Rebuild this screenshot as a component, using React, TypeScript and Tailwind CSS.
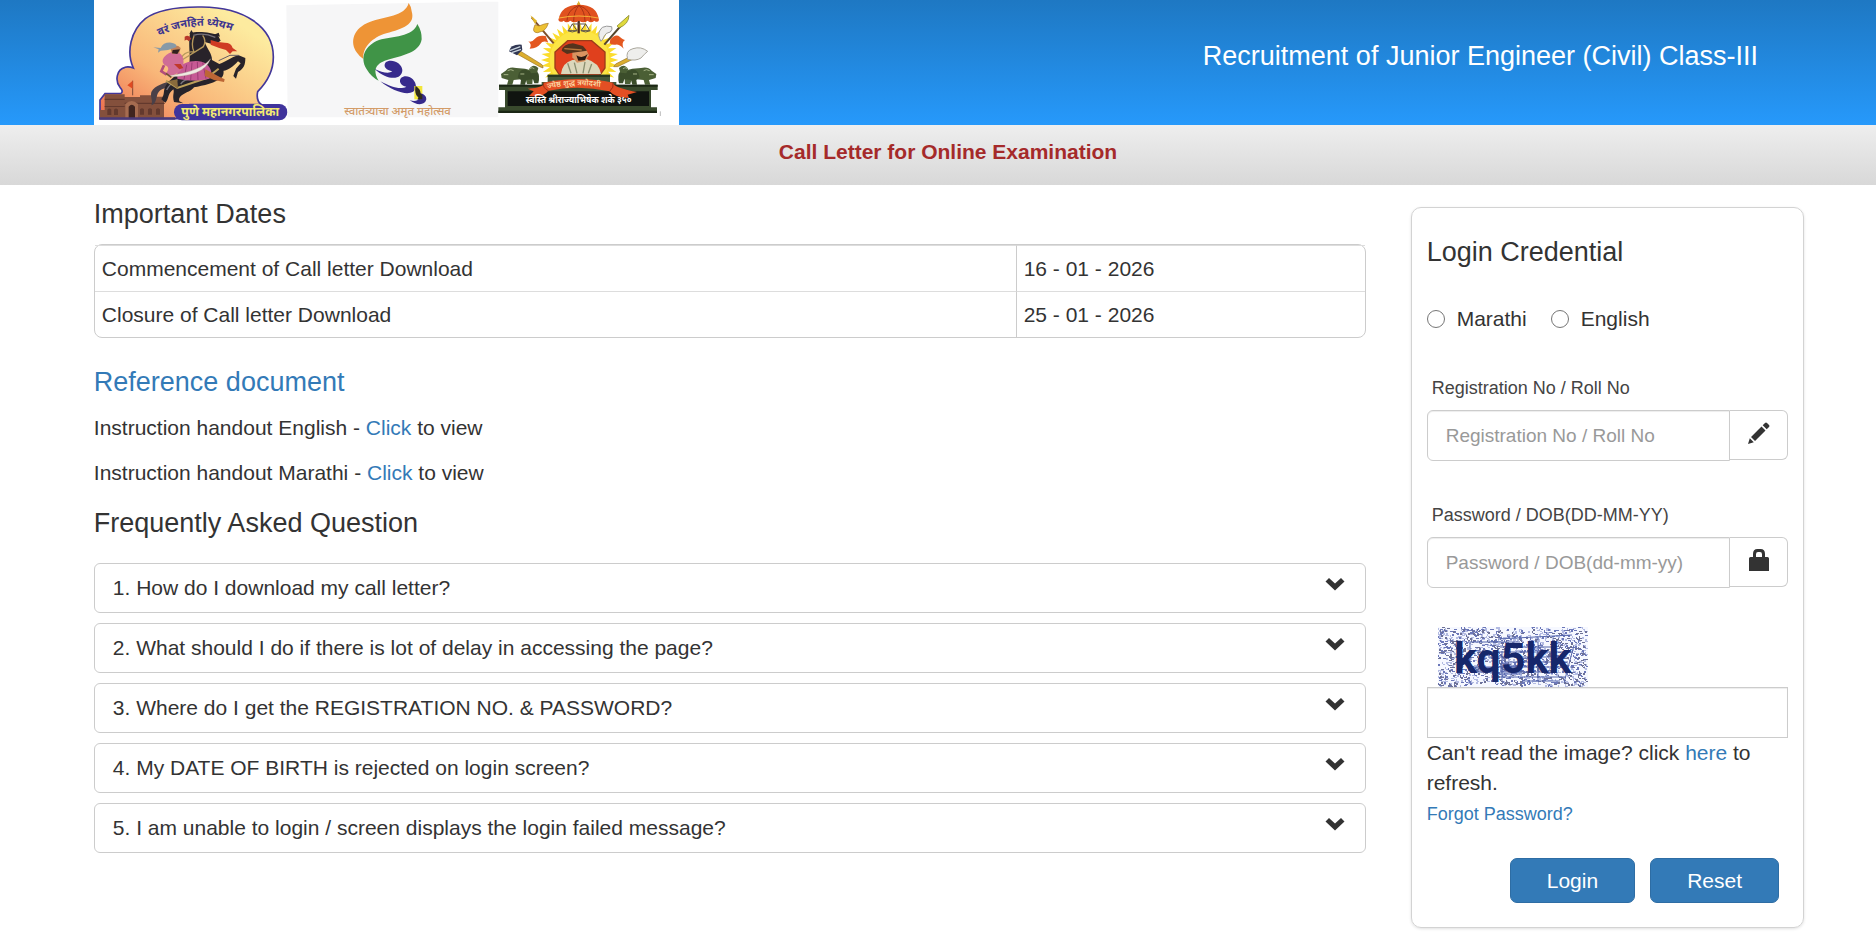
import React from "react";

const FAQS = [
  "How do I download my call letter?",
  "What should I do if there is lot of delay in accessing the page?",
  "Where do I get the REGISTRATION NO. & PASSWORD?",
  "My DATE OF BIRTH is rejected on login screen?",
  "I am unable to login / screen displays the login failed message?",
];

const DATES = [
  ["Commencement of Call letter Download", "16 - 01 - 2026"],
  ["Closure of Call letter Download", "25 - 01 - 2026"],
];

const DEVANAGARI = '"Noto Sans Devanagari", "Noto Sans", "Lohit Devanagari", sans-serif';

function radialPoints(cx: number, cy: number, outer: number, inner: number, count: number) {
  const points: string[] = [];
  for (let i = 0; i < count * 2; i++) {
    const r = i % 2 === 0 ? outer : inner;
    const a = (Math.PI * i) / count - Math.PI / 2;
    points.push(`${(cx + r * Math.cos(a)).toFixed(1)},${(cy + r * Math.sin(a)).toFixed(1)}`);
  }
  return points.join(" ");
}

function HorsemanEmblem() {
  return (
    <g transform="translate(-4 0) scale(.33333)">
      <path
        d="M45 281H92C100 276 96 268 90 262C74 242 80 208 105 202C114 199 122 201 130 204C108 156 122 92 166 56C206 26 268 20 335 21C462 22 551 80 550 172C550 212 534 244 503 275C500 290 502 306 515 314H300V356H30V300Z"
        fill="url(#sky)"
        stroke="#43379a"
        strokeWidth="5"
      />
      <path d="M44 283H104V291H150V286H200V290H222V358H30V330H44Z" fill="#84503c" />
      <g fill="#63392d">
        <path d="M44 296h60v4H44zM104 308h120v4H104zM44 318h60v3H44z" />
        <path d="M52 345v-16q6-7 12 0v16zM72 345v-16q6-7 12 0v16zM150 344v-16q6-7 12 0v16zM174 344v-16q6-7 12 0v16zM198 344v-16q6-7 12 0v16z" />
      </g>
      <path d="M106 354v-42q19-18 38 0v42z" fill="#a66c50" />
      <path d="M116 354v-34q9-12 19 0v34z" fill="#40251f" />
      <path d="M28 352h228v7H28z" fill="#4b3a78" />
      <path d="M128 286V242" stroke="#7b4a3a" strokeWidth="3" />
      <path d="M128 242l-16 14 16 10z" fill="#e04a22" />
      <rect x="252" y="312" width="340" height="49" rx="24" fill="#40349c" />
      <text x="274" y="347" fontSize="37" fontWeight="700" fill="#f3ea72" fontFamily={DEVANAGARI}>
        पुणे महानगरपालिका
      </text>
      <path id="motto" d="M208 108Q335 46 462 108" fill="none" />
      <text fontSize="33" fontWeight="700" fill="#3e3590" fontFamily={DEVANAGARI}>
        <textPath href="#motto">वरं जनहितं ध्येयम</textPath>
      </text>
      <path d="M246 240C222 252 196 254 184 276C180 292 190 302 184 316C202 310 196 290 206 276C216 264 232 264 250 262Z" fill="#4a4048" />
      <path
        d="M300 100C322 92 366 98 384 106L392 122L374 134L344 126C352 148 366 160 366 180L392 194C402 206 404 222 396 232C380 248 338 258 312 262C302 278 262 282 268 304L280 310L252 306C246 286 254 278 250 268C230 284 238 298 226 308L214 298C226 282 218 272 228 256C244 230 280 214 298 192C302 164 294 136 300 100Z"
        fill="#28232a"
      />
      <path d="M376 196C404 190 424 170 446 166L466 174C466 194 462 206 444 216L438 236L430 228L438 206L452 190L444 184C430 200 412 214 390 214Z" fill="#28232a" />
      <path d="M386 182L420 166L446 166" fill="none" stroke="#625b64" strokeWidth="3" />
      <path d="M310 106Q340 96 376 112M272 252Q286 232 320 240M230 270Q240 250 262 240" fill="none" stroke="#77727b" strokeWidth="4" />
      <path d="M298 102l6-12 6 10zM372 104l14-6 4 12z" fill="#28232a" />
      <path d="M284 110Q296 102 304 116L296 124Q292 116 284 122Z" fill="#b8372b" />
      <path d="M362 120Q384 128 404 128T428 144L442 154L428 154L420 162L408 150Q386 144 362 134Z" fill="#cf3a24" />
      <path d="M312 108Q302 134 312 156Q284 152 274 174M338 106Q350 122 340 140L276 180" fill="none" stroke="#b5985b" strokeWidth="4" />
      <path d="M228 242L262 264L350 234L386 206" fill="none" stroke="#bda05a" strokeWidth="6" />
      <path d="M232 244L264 266L262 238Z" fill="#8a6b3c" />
      <path d="M262 208C276 184 326 174 350 192C366 208 368 226 358 236C328 244 290 242 262 236Z" fill="#c65a94" />
      <path d="M290 194l-8 44M306 188l-4 52M322 186l2 54M338 188l10 48" stroke="#9b3c73" strokeWidth="3" />
      <path d="M346 208L388 230L404 238L402 246L372 240L344 228Z" fill="#bd6635" />
      <path d="M222 172C236 152 264 150 274 164C284 178 282 198 272 212C256 226 236 232 226 222C238 210 238 200 224 196C216 188 216 180 222 172Z" fill="#cf6c96" />
      <path d="M222 196L214 214L230 224" fill="none" stroke="#b24d7c" strokeWidth="8" />
      <path d="M240 140Q262 132 272 144L268 160L246 162Z" fill="#c28158" />
      <path d="M248 150L270 148L262 162L246 160Z" fill="#30201e" />
      <path d="M190 142L212 144Q220 126 244 128Q264 132 258 142L234 150L212 152L204 158L206 148Z" fill="#8799a7" />
      <path d="M252 192h20l8 12-12 4z" fill="#c0392b" />
      <path d="M234 228Q286 220 316 208T362 176Q350 206 318 218T238 230Z" fill="#efe9e2" stroke="#a99a8a" strokeWidth="1" />
      <path d="M228 220l16 12" stroke="#6d5332" strokeWidth="5" />
    </g>
  );
}

function FestivalEmblem() {
  return (
    <g transform="translate(191 0) scale(.33333)">
      <path d="M4 16L600 5H640V352H8Z" fill="#f6f6f7" />
      <path d="M371 9C360 50 300 48 254 66C206 84 192 126 216 158Q224 170 235 177C232 142 262 112 304 100C354 86 392 74 380 34Q378 18 371 9Z" fill="#ee9436" />
      <path d="M397 72C384 112 322 108 282 120C240 136 224 172 244 206Q258 230 281 242C264 214 268 192 306 180C346 168 404 160 410 118Q411 94 397 72Z" fill="#409447" />
      <path d="M301 188C316 174 350 186 352 210C352 238 312 246 268 206C292 218 312 222 322 214C304 210 294 200 301 188Z" fill="#372a8c" />
      <path d="M348 234C364 220 394 236 393 262C388 292 332 282 286 244C320 262 346 270 364 260C348 258 340 244 348 234Z" fill="#372a8c" />
      <rect x="388" y="258" width="24" height="40" fill="#f2e63a" />
      <path d="M392 258Q408 270 406 280Q424 284 424 298C420 318 392 316 374 300C388 306 400 302 402 294Q388 286 392 258Z" fill="#372a8c" />
      <path d="M392 258Q408 270 406 280L412 286V298H390Q402 298 400 290Q388 282 392 258Z" fill="#302b16" />
      <text x="178" y="345" fontSize="34" fontWeight="500" fill="#d39b68" fontFamily={DEVANAGARI}>
        स्वातंत्र्याचा अमृत महोत्सव
      </text>
    </g>
  );
}

function Lion() {
  return (
    <g fill="#4b5f35">
      <path d="M62 212Q74 198 94 204L120 206Q140 208 144 224L142 252H126L122 236L86 240L82 254H66L70 240L50 234L48 222Z" />
      <path d="M102 218Q114 202 128 212L156 214Q166 226 160 250H148L144 238L124 240L120 254H106L108 240L98 232Z" fill="#3b4d2a" />
      <path d="M132 208Q144 188 160 204L156 218L138 220Z" />
      <path d="M68 212Q78 206 86 212M56 224h14M106 222h12M134 206q8-6 14 0" fill="none" stroke="#a6b488" strokeWidth="3" />
    </g>
  );
}

function CoronationEmblem() {
  return (
    <g transform="translate(391 0) scale(.33333)">
      <polygon points={radialPoints(284, 180, 116, 92, 40)} fill="#fbdc2c" />
      <circle cx="284" cy="180" r="90" fill="#fce545" />
      <polygon points="248,122 320,122 360,156 360,204 340,232 228,232 210,204 210,156" fill="#e0401d" stroke="#9b3b1a" strokeWidth="4" />
      <path d="M228 222Q232 188 262 180L306 178Q342 188 348 222Z" fill="#dcd7bb" />
      <path d="M248 190l10 30M268 188l8 32M300 186l-6 34M320 192l-10 28" stroke="#8a8f70" strokeWidth="4" />
      <path d="M262 146L304 150L312 166L300 184L276 188L262 172Z" fill="#d99360" />
      <path d="M274 166Q292 178 308 162L300 180L280 182Z" fill="#2b1912" />
      <path d="M230 152Q234 132 264 130L294 138L306 152L262 158L246 162Z" fill="#54331d" />
      <path d="M238 146L290 150" stroke="#b8783b" strokeWidth="4" />
      <path d="M281 10V100" stroke="#4b2a22" strokeWidth="7" />
      <path d="M281 2l6 14h-12z" fill="#e6b32b" />
      <path d="M220 60Q228 14 282 14T342 60Q338 70 328 62Q318 72 308 62Q296 72 282 62Q268 72 256 62Q244 72 236 62Q226 70 220 60Z" fill="#e0511f" />
      <path d="M282 16Q246 30 246 62M282 16Q266 34 266 64M282 16Q300 34 300 64M282 16Q318 30 318 62" fill="none" stroke="#a73214" strokeWidth="3" />
      <path d="M222 54Q282 42 340 54" fill="none" stroke="#f5b439" strokeWidth="3" />
      <g fill="none" stroke="#5d554e" strokeWidth="3">
        <path d="M262 72H302M262 72L250 92H276ZM302 72L288 92H314Z" />
        <path d="M248 92q14 8 28 0M288 92q14 8 28 0" />
      </g>
      <path d="M140 52L206 130" stroke="#7d4f2b" strokeWidth="6" />
      <path d="M136 46L156 62L150 72Z" fill="#e3b827" />
      <path d="M146 86Q144 98 158 98L176 92Q186 84 190 70L178 72L162 78L150 74Z" fill="#edc133" stroke="#a5731d" strokeWidth="2" />
      <path d="M182 108Q160 104 150 116T130 124Q142 134 134 146Q158 144 166 132T190 128Z" fill="#e4571f" />
      <path d="M428 54L358 134" stroke="#54452b" strokeWidth="6" />
      <path d="M432 46Q432 72 402 84L396 78Z" fill="#dfd93c" stroke="#7b7b26" strokeWidth="2" />
      <path d="M344 116Q336 98 352 82Q364 76 380 80Q384 88 376 96Q362 98 358 108T348 124Z" fill="#ededed" stroke="#9a9a9a" strokeWidth="3" />
      <path d="M376 118Q392 100 404 110T420 120Q408 128 416 146Q402 132 392 134T374 130Z" fill="#e4571f" />
      <path d="M104 152L168 192Q176 196 174 204L164 200L96 162Z" fill="#dcae2e" stroke="#9a7421" strokeWidth="2" />
      <path d="M72 154Q76 132 110 134L112 150L96 166Z" fill="#303653" />
      <path d="M74 152L106 140M80 158L108 148" stroke="#c9d4dd" strokeWidth="4" />
      <path d="M466 154L392 192L386 200L398 200L468 166Z" fill="#dcae2e" stroke="#9a7421" strokeWidth="2" />
      <path d="M428 178Q420 152 444 146Q468 138 488 154Q478 162 468 174Q452 184 428 178Z" fill="#eeeeec" stroke="#aaa79d" strokeWidth="3" />
      <Lion />
      <g transform="translate(562 0) scale(-1 1)">
        <Lion />
      </g>
      <path d="M188 224H375V246H394V262H170V246H188Z" fill="#46583a" />
      <path d="M188 224H375V231H188Z" fill="#283820" />
      <path d="M42 254H518V270H498V322H516V338H40V322H60V270H42Z" fill="#394a2d" />
      <path d="M42 254H518V260H42ZM40 332H516V339H40Z" fill="#1b2715" />
      <path d="M68 274H492V318H68Z" fill="#101410" />
      <path d="M132 288L146 274L128 266Q180 262 176 248Q282 226 384 248Q384 262 456 276L428 284L432 294Q390 294 374 274Q282 254 190 272Q176 292 132 288Z" fill="#e34f24" />
      <path d="M176 248Q172 264 190 272M384 248Q388 262 374 274" fill="none" stroke="#9e2d14" strokeWidth="3" />
      <path id="ribbon" d="M188 266Q280 246 374 266" fill="none" />
      <text fontSize="23" fontWeight="600" fill="#fbd9a5" fontFamily={DEVANAGARI}>
        <textPath href="#ribbon">ज्येष्ठ शुद्ध त्रयोदशी</textPath>
      </text>
      <text x="122" y="308" fontSize="26" fontWeight="700" fill="#ffffff" fontFamily={DEVANAGARI}>
        स्वस्ति श्रीराज्याभिषेक शके ३५०
      </text>
      <path d="M526 334v14" stroke="#bbbbbb" strokeWidth="3" />
    </g>
  );
}

function Banner() {
  return (
    <svg viewBox="0 0 585 125" className="h-[125px] w-[585px] shrink-0 bg-white" role="img">
      <defs>
        <linearGradient id="sky" x1="0" y1="1" x2="0.85" y2="0.2">
          <stop offset="0" stopColor="#ec6a4c" />
          <stop offset=".45" stopColor="#f9b87a" />
          <stop offset="1" stopColor="#fdeb9f" />
        </linearGradient>
      </defs>
      <HorsemanEmblem />
      <FestivalEmblem />
      <CoronationEmblem />
    </svg>
  );
}

/* Speckles come from a fixed seed so the challenge looks the same on every render. */
function speckles(seed: number, count: number) {
  let s = seed;
  const next = () => {
    s = (s * 1103515245 + 12345) % 2147483648;
    return s / 2147483648;
  };
  let d = "";
  for (let i = 0; i < count; i++) {
    const x = Math.floor(next() * 148);
    const y = Math.floor(next() * 59);
    const kind = next();
    if (kind > 0.66) d += `M${x} ${y}h3v1h-3z`;
    else if (kind > 0.33) d += `M${x} ${y}h1v2h2v1h-2v-1h-1z`;
    else d += `M${x} ${y}h2v2h-2z`;
  }
  return d;
}

const SPECKLES_LIGHT = speckles(7, 650);
const SPECKLES_MID = speckles(41, 420);
const SPECKLES_DARK = speckles(99, 300);

function Captcha() {
  return (
    <svg viewBox="0 0 150 60" className="ml-[11px] block h-[60px] w-[150px] bg-[#f6f8ff]" role="img">
      <path d={SPECKLES_LIGHT} fill="#b3bbe2" />
      <path d={SPECKLES_MID} fill="#6b77b8" />
      <path d={SPECKLES_DARK} fill="#6d7196" />
      <g fill="none" stroke="#5566ac" strokeWidth="1">
        <path d="M30 15H82M62 20H118M40 25H134M50 30H126M66 35H130M30 40H122M70 45H118M62 50H128M84 54H122M60 12L134 8M100 10V54M32 16V42M136 18L126 56M64 24V54" />
      </g>
      <path d="M62 38h22v10H62zM36 40h22v6H36z" fill="#5264ad" opacity=".55" />
      <text x="16" y="46" fontSize="43" fontWeight="700" fill="#16276b" fontFamily="Roboto, sans-serif">
        kq5kk
      </text>
    </svg>
  );
}

function ChevronIcon() {
  return (
    <svg viewBox="0 0 20 14" className="mt-[13px] h-[14px] w-5 shrink-0" aria-hidden="true">
      <path d="M.5 4.5L4 1L10 6.600L16 1L19.500 4.500L10 13.500Z" fill="#333333" />
    </svg>
  );
}

function PencilIcon() {
  return (
    <svg viewBox="0 0 22 22" className="h-[22px] w-[22px]" aria-hidden="true">
      <path d="M0 22L1.800 16.200L5.800 20.200ZM3 15L13.500 4.500L17.500 8.500L7 19ZM14.700 3.300L17 1Q18 0 19 1L21 3Q22 4 21 5L18.700 7.300Z" fill="#333333" />
    </svg>
  );
}

function LockIcon() {
  return (
    <svg viewBox="0 0 20 22" className="h-[22px] w-5" aria-hidden="true">
      <path
        d="M1.500 8H4V5Q4 0 8.500 0H11.500Q16 0 16 5V8H18.500Q20 8 20 9.500V22H0V9.500Q0 8 1.500 8ZM7 8H13V5.200Q13 3 11 3H9Q7 3 7 5.200Z"
        fill="#333333"
        fillRule="evenodd"
      />
    </svg>
  );
}

function Field(props: { id: string; label: string; placeholder: string; type: string; icon: React.ReactNode }) {
  return (
    <div className="mt-[41px]">
      <label htmlFor={props.id} className="block pl-[5px] text-[18px] leading-[26px] text-[#444444]">
        {props.label}
      </label>
      <div className="mt-[9px] flex items-start">
        <input
          id={props.id}
          type={props.type}
          placeholder={props.placeholder}
          className="h-[51px] min-w-0 flex-1 rounded-l-[6px] border border-[#cccccc] bg-white px-[18px] text-[19px] shadow-[inset_0_1px_1px_rgba(0,0,0,0.075)] placeholder:text-[#999999]"
        />
        <span className="flex h-[50px] w-[58px] justify-center rounded-r-[6px] border border-l-0 border-[#cccccc] pt-[11px]">
          {props.icon}
        </span>
      </div>
    </div>
  );
}

function LoginCard() {
  return (
    <form
      onSubmit={(e) => e.preventDefault()}
      className="mt-[22px] w-[23%] shrink-0 rounded-[10px] border border-[#d3d3d3] px-[15px] pt-[29px] pb-6 shadow-[0_1px_3px_rgba(0,0,0,0.12)]"
    >
      <h2 className="text-[27px] leading-[30px]">Login Credential</h2>
      <div className="mt-[37px] flex gap-6 leading-[30px]">
        {["Marathi", "English"].map((language) => (
          <label key={language} className="flex items-center gap-3">
            <input
              type="radio"
              name="language"
              className="size-[18px] appearance-none rounded-full border border-[#767676] bg-white checked:border-[5px] checked:border-[#337ab7]"
            />
            {language}
          </label>
        ))}
      </div>
      <Field id="reg" label="Registration No / Roll No" placeholder="Registration No / Roll No" type="text" icon={<PencilIcon />} />
      <Field id="pwd" label="Password / DOB(DD-MM-YY)" placeholder="Password / DOB(dd-mm-yy)" type="password" icon={<LockIcon />} />
      <div className="mt-[39px]">
        <Captcha />
        <input
          type="text"
          aria-labelledby="captcha-help"
          className="block h-[51px] w-full border border-[#cccccc] px-[18px] shadow-[inset_0_1px_1px_rgba(0,0,0,0.075)]"
        />
      </div>
      <p id="captcha-help" className="leading-[30px]">
        Can't read the image? click <a href="#refresh" className="text-[#337ab7]">here</a> to refresh.
      </p>
      <a href="#forgot" className="mt-[3px] block text-[18px] leading-[26px] text-[#337ab7]">
        Forgot Password?
      </a>
      <div className="mt-[31px] mr-[9px] flex justify-end gap-[15px]">
        <button type="submit" className="h-[45px] rounded-[7px] border border-[#2e6da4] bg-[#337ab7] px-9 text-white">
          Login
        </button>
        <button type="reset" className="h-[45px] rounded-[7px] border border-[#2e6da4] bg-[#337ab7] px-9 text-white">
          Reset
        </button>
      </div>
    </form>
  );
}

export default function App() {
  return (
    <div className="bg-white pb-[5px] font-['Liberation_Sans',Arial,sans-serif] text-[21px] text-[#333333]">
      <header className="flex justify-between bg-linear-to-b from-[#1e78c3] to-[#2699fb] pr-[118px] pl-[5%]">
        <Banner />
        <h1 className="pt-[41px] text-[27px] leading-[30px] text-white">Recruitment of Junior Engineer (Civil) Class-III</h1>
      </header>
      <div className="h-[60px] bg-linear-to-b from-[#eeeeee] to-[#d8d8d8] pt-3 pl-5 text-center leading-[30px] font-bold text-[#a52a2a]">
        Call Letter for Online Examination
      </div>
      <main className="flex items-start gap-[45px] pr-[72px] pl-[5%]">
        <div className="min-w-0 flex-1 pt-[14px]">
          <h2 className="text-[27px] leading-[30px]">Important Dates</h2>
          <table className="mt-[15px] w-full border-separate border-spacing-0 rounded-[8px] border border-[#cccccc] leading-[30px]">
            <tbody>
              {DATES.map(([event, date]) => (
                <tr key={event}>
                  <td className="border-t border-[#dddddd] px-[7px] pt-2 pb-[7px]">{event}</td>
                  <td className="w-[349px] border-t border-l border-[#dddddd] border-l-[#cccccc] px-[7px] pt-2 pb-[7px]">{date}</td>
                </tr>
              ))}
            </tbody>
          </table>
          <h2 className="mt-[29px] text-[27px] leading-[30px] text-[#337ab7]">Reference document</h2>
          <div className="mt-4 flex flex-col gap-[15px] leading-[30px]">
            {["English", "Marathi"].map((language) => (
              <p key={language}>
                Instruction handout {language} - <a href={`#${language}`} className="text-[#337ab7]">Click</a> to view
              </p>
            ))}
          </div>
          <h2 className="mt-5 mb-[25px] text-[27px] leading-[30px]">Frequently Asked Question</h2>
          <div className="flex flex-col gap-[10px]">
            {FAQS.map((question, i) => (
              <button
                key={question}
                type="button"
                className="flex h-[50px] w-full items-start justify-between rounded-[6px] border border-[#cccccc] pr-5 pl-[18px] text-left leading-[30px]"
              >
                <span className="pt-[9px]">
                  {i + 1}. {question}
                </span>
                <ChevronIcon />
              </button>
            ))}
          </div>
        </div>
        <LoginCard />
      </main>
    </div>
  );
}
